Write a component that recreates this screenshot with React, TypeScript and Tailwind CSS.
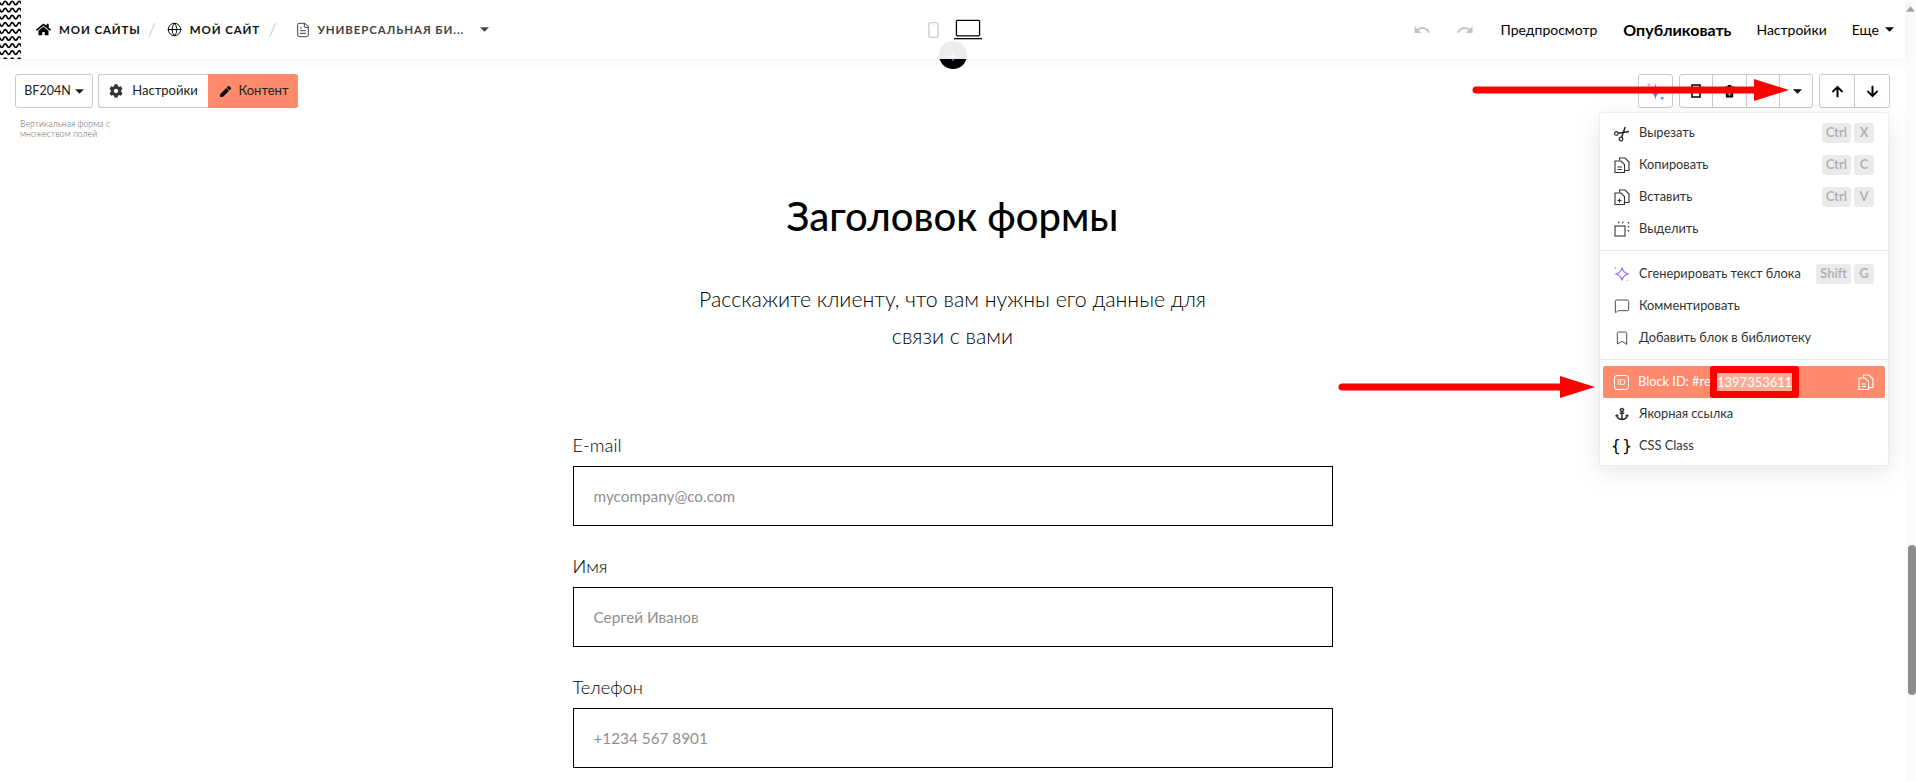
import React from "react";
import { FaHome, FaCog, FaPen, FaAnchor, FaArrowUp, FaArrowDown } from "react-icons/fa";
import { MdUndo, MdRedo } from "react-icons/md";
import { Globe, FileText, MessageSquare, Bookmark } from "lucide-react";

const Caret = ({ className = "" }: { className?: string }) => (
  <svg viewBox="0 0 10 5" className={`w-[9px] h-[5px] ${className}`}><path d="M0 0h10L5 5z" fill="currentColor" /></svg>
);

const Zigzag = () => (
  <svg className="w-[21px] h-[59px] shrink-0" viewBox="0 0 21 59">
    {Array.from({ length: 9 }).map((_, i) => (
      <path key={i} d={`M-3.500 ${i * 7.1 + 3} q1.750 -3.500 3.500 0 t3.500 0 t3.500 0 t3.500 0 t3.500 0 t3.500 0 t3.500 0 t3.500 0`} fill="none" stroke="#000" strokeWidth="1.700" />
    ))}
  </svg>
);

const CopyIcon = ({ mark }: { mark: "lines" | "plus" }) => (
  <svg viewBox="0 0 16 16" className="w-4 h-4" fill="none" stroke="currentColor" strokeWidth="1.100">
    <path d="M5.500 3.500V1h5.500l4 4v8.500h-4" />
    <path d="M1 4h6l3.500 3.500V15.500H1z" />
    {mark === "lines" ? <path d="M3.500 10h4.500M3.500 12.500h4.500" /> : <path d="M5.500 9.500v4M3.500 11.500h4" />}
  </svg>
);

const ScissorsIcon = () => (
  <svg viewBox="0 0 24 24" className="w-[17px] h-[17px] -rotate-[40deg]" fill="none" stroke="#222" strokeWidth="1.800">
    <circle cx="5.500" cy="6.500" r="2.700" />
    <circle cx="5.500" cy="17.500" r="2.700" />
    <path d="M8 8l14 8.500M8 16L22 7.500" strokeWidth="2.200" />
  </svg>
);

const SelectIcon = () => (
  <svg viewBox="0 0 16 16" className="w-4 h-4" fill="none" stroke="currentColor" strokeWidth="1.100">
    <rect x="1" y="5" width="10" height="10" />
    <path d="M4 1.500h1.400M8 1.500h1.400M14.500 1v1.400M14.500 5v1.400M14.500 9v1.400" strokeWidth="1.400" />
  </svg>
);

const Sparkle = () => (
  <svg viewBox="0 0 16 16" className="w-4 h-4" fill="none" stroke="#9b72f0" strokeWidth="1.300">
    <path d="M8 1.500c.6 3.400 2.400 5.400 6 6.500-3.600 1.100-5.400 3.100-6 6.500C7.400 11.100 5.600 9.100 2 8c3.600-1.100 5.400-3.100 6-6.500z" />
    <path d="M1.500 1v2M13.500 13.500v1.500" strokeWidth="1.400" stroke="#c3a6f7" />
  </svg>
);

const Key = ({ children }: { children: React.ReactNode }) => (
  <span className="h-5 px-[4px] min-w-[20px] flex items-center justify-center rounded-[3px] bg-[#ebebeb] text-[#b3b3b3] text-[13px] font-bold">{children}</span>
);

const Item = ({ icon, label, keys }: { icon: React.ReactNode; label: string; keys?: string[] }) => (
  <div className="h-8 flex items-center pl-[14px] pr-[14px] text-[#333] text-[12.800px]">
    <span className="w-[16px] mr-[9px] flex justify-center text-[#333]">{icon}</span>
    <span className="flex-1 whitespace-nowrap">{label}</span>
    {keys && <span className="flex gap-[3px]">{keys.map((k) => <Key key={k}>{k}</Key>)}</span>}
  </div>
);

const Cell = ({ children }: { children?: React.ReactNode }) => (
  <div className="flex-1 h-full flex items-center justify-center border-r border-[#c9c9c9] last:border-r-0">{children}</div>
);

const Field = ({ label, placeholder }: { label: string; placeholder: string }) => (
  <div className="mb-[31px]">
    <div className="text-[18.300px] leading-[19px] font-light text-black mb-[11px]">{label}</div>
    <div className="h-[60px] border border-black flex items-center pl-[20px] text-[15.300px] text-[#8f8f8f]">{placeholder}</div>
  </div>
);

const RedArrow = ({ className, width }: { className: string; width: number }) => (
  <svg className={`absolute z-50 ${className}`} width={width} height={22} viewBox={`0 0 ${width} 22`}>
    <path d={`M4 11H${width - 34}`} stroke="#fe0000" strokeWidth="7" strokeLinecap="round" />
    <path d={`M${width - 35} 0L${width} 11L${width - 35} 22z`} fill="#fe0000" />
  </svg>
);

export default function App() {
  return (
    <div className="relative w-[1916px] h-[781px] overflow-hidden bg-white flex font-['Lato','Noto_Sans',sans-serif]">
      <div className="relative flex-1 min-w-0 flex flex-col">
        <header className="relative z-20 h-[59px] shrink-0 bg-white/[0.93] flex items-center pr-[11px] shadow-[0_2px_10px_rgba(0,0,0,0.06)]">
          <Zigzag />
          <div className="flex items-center ml-[15px] text-[11.500px] font-bold tracking-[0.900px] text-[#111] w-[470px] whitespace-nowrap">
            <FaHome className="w-[15px] h-[15px] mr-[8px] text-black" />
            <span className="w-[79px]">МОИ САЙТЫ</span>
            <span className="mx-[10px] text-[18px] font-light text-[#bbb]">/</span>
            <Globe className="w-[15px] h-[15px] mr-[8px] text-black" strokeWidth={1.500} />
            <span className="w-[69px]">МОЙ САЙТ</span>
            <span className="ml-[10px] text-[18px] font-light text-[#bbb]">/</span>
            <FileText className="w-[16px] h-[16px] ml-[18px] mr-[6px] text-[#444]" strokeWidth={1.500} />
            <span className="text-[#444] w-[163px]">УНИВЕРСАЛЬНАЯ БИ...</span>
            <Caret className="text-[#444]" />
          </div>
          <div className="flex items-center ml-[422px] gap-[15px]">
            <svg viewBox="0 0 12 18" className="w-[11px] h-[18px] text-[#ccc]" fill="none" stroke="currentColor" strokeWidth="1.500"><rect x="1" y="1" width="10" height="16" rx="1.500" /><path d="M6 3v1" /></svg>
            <svg viewBox="0 0 29 21" className="w-[28px] h-[21px] text-black" fill="none" stroke="currentColor" strokeWidth="1.300"><rect x="2.500" y="1" width="24" height="16" rx="1" /><path d="M0 20h29" /></svg>
          </div>
          <div className="flex-1" />
          <div className="flex items-center text-[14px] text-black whitespace-nowrap">
            <MdUndo className="w-[18px] h-[18px] text-[#c4c4c4] mr-[25px]" />
            <MdRedo className="w-[18px] h-[18px] text-[#c4c4c4] mr-[27px]" />
            <span>Предпросмотр</span>
            <span className="text-[16px] font-bold ml-[26px]">Опубликовать</span>
            <span className="ml-[25px]">Настройки</span>
            <span className="ml-[25px]">Еще</span>
            <Caret className="ml-[6px]" />
          </div>
        </header>

        <main className="flex-1 relative">
          <div className="flex items-start justify-between px-[15px] pt-[15px]">
            <div>
              <div className="flex h-[34px] gap-[5px] text-[13px] text-[#222]">
                <div className="w-[78px] text-[12.500px] border border-[#c9c9c9] rounded-[3px] flex items-center justify-center gap-[4px]">BF204N<Caret /></div>
                <div className="flex">
                  <div className="w-[110px] border border-[#c9c9c9] border-r-0 rounded-l-[3px] flex items-center justify-center gap-[9px]"><FaCog className="w-[14px] h-[14px] text-[#333]" />Настройки</div>
                  <div className="w-[90px] pl-[2px] bg-[#ff8a6c] rounded-r-[3px] flex items-center justify-center gap-[8px]"><FaPen className="w-[11px] h-[11px] text-black" />Контент</div>
                </div>
              </div>
              <div className="mt-[11px] ml-[5px] text-[8.800px] leading-[10px] text-[#666] w-[110px] font-light">Вертикальная форма с множеством полей</div>
            </div>
            <div className="flex h-[34px] gap-[6px]">
              <div className="flex w-[35px] border border-[#c9c9c9] rounded-[3px] bg-white">
                <Cell><svg viewBox="0 0 20 20" className="w-[19px] h-[19px]"><path d="M10 1c.6 5 2.500 8 7 9-4.500 1-6.400 4-7 9-.6-5-2.500-8-7-9 4.500-1 6.400-4 7-9z" fill="#8a5cf6" /><circle cx="3" cy="3" r="1.500" fill="#d99cf5" /><circle cx="17" cy="17" r="1.500" fill="#6d8cf8" /></svg></Cell>
              </div>
              <div className="flex w-[134px] border border-[#c9c9c9] rounded-[3px] bg-white">
                <Cell><svg viewBox="0 0 10 14" className="w-[10px] h-[14px]" fill="none" stroke="#000" strokeWidth="1.500"><rect x="1" y="1" width="8" height="12" /></svg></Cell>
                <Cell><svg viewBox="0 0 12 14" className="w-[11px] h-[14px]"><path d="M1 2h10v1.500H1zM4 0.500h4v2H4zM2 4.500h8V14H2z" fill="#000" /><path d="M4.500 8v4M6 8v4M7.500 8v4" stroke="#fff" strokeWidth="0.700" /></svg></Cell>
                <Cell />
                <Cell><Caret className="text-black ml-[3px]" /></Cell>
              </div>
              <div className="flex w-[71px] border border-[#c9c9c9] rounded-[3px] bg-white">
                <Cell><FaArrowUp className="w-[13px] h-[13px] text-black" /></Cell>
                <Cell><FaArrowDown className="w-[13px] h-[13px] text-black" /></Cell>
              </div>
            </div>
          </div>

          <div className="flex flex-col items-center mt-[52px]">
            <h1 className="text-[40px] leading-[50px] font-medium text-black">Заголовок формы</h1>
            <p className="mt-[40px] w-[560px] text-center text-[21.300px] leading-[37px] font-light text-black">Расскажите клиенту, что вам нужны его данные для связи с вами</p>
            <div className="mt-[81px] w-[760px]">
              <Field label="E-mail" placeholder="mycompany@co.com" />
              <Field label="Имя" placeholder="Сергей Иванов" />
              <Field label="Телефон" placeholder="+1234 567 8901" />
            </div>
          </div>
        </main>

        <div className="absolute z-10 left-[939px] top-[41px] w-[28px] h-[28px] rounded-full bg-black flex items-center justify-center">
          <span className="text-white text-[18px] leading-none font-light">+</span>
        </div>

        <div className="absolute z-30 left-[1599px] top-[112px] w-[290px] h-[354px] bg-white rounded-[3px] border border-[#eee] shadow-[0_6px_24px_rgba(0,0,0,0.10)] pt-[4px]">
          <Item icon={<ScissorsIcon />} label="Вырезать" keys={["Ctrl", "X"]} />
          <Item icon={<CopyIcon mark="lines" />} label="Копировать" keys={["Ctrl", "C"]} />
          <Item icon={<CopyIcon mark="plus" />} label="Вставить" keys={["Ctrl", "V"]} />
          <Item icon={<SelectIcon />} label="Выделить" />
          <div className="h-px bg-[#e8e8e8] mt-[5px] mb-[7px]" />
          <Item icon={<Sparkle />} label="Сгенерировать текст блока" keys={["Shift", "G"]} />
          <Item icon={<MessageSquare className="w-4 h-4" strokeWidth={1.300} />} label="Комментировать" />
          <Item icon={<Bookmark className="w-4 h-4" strokeWidth={1.300} />} label="Добавить блок в библиотеку" />
          <div className="h-px bg-[#e8e8e8] mt-[5px] mb-[6px]" />
          <div className="relative mx-[3px] h-8 flex items-center pl-[11px] pr-[11px] bg-[#ff8a6c] rounded-[2px] text-white text-[12.800px]">
            <span className="w-[15px] h-[15px] mr-[9px] border border-white rounded-[3px] text-[8px] leading-[13px] text-center">ID</span>
            <span className="flex-1 whitespace-nowrap">Block ID: #rec</span>
            <span className="text-white"><CopyIcon mark="lines" /></span>
            <div className="absolute left-[107px] top-0 w-[89px] h-8 rounded-[3px] bg-[#fe0000] flex items-center justify-center">
              <span className="bg-[#ffab96] w-[75px] h-[18px] text-center leading-[18px] text-[13px] text-white">1397353611</span>
            </div>
          </div>
          <Item icon={<FaAnchor className="w-[14px] h-[14px]" />} label="Якорная ссылка" />
          <Item icon={<span className="text-[16px] leading-none tracking-[1px] text-black font-['DejaVu_Sans',sans-serif]">{"{}"}</span>} label="CSS Class" />
        </div>

        <RedArrow className="left-[1472px] top-[79px]" width={317} />
        <RedArrow className="left-[1338px] top-[376px]" width={257} />
      </div>

      <aside className="relative w-[11px] shrink-0 bg-[#fbfbfb]">
        <svg viewBox="0 0 10 6" className="absolute left-[1px] top-[6px] w-[9px] h-[6px]"><path d="M0 6L5 0l5 6z" fill="#a3a3a3" /></svg>
        <div className="absolute right-0 top-[545px] w-[8px] h-[150px] rounded-[4px] bg-[#8c8c8c]" />
      </aside>
    </div>
  );
}
